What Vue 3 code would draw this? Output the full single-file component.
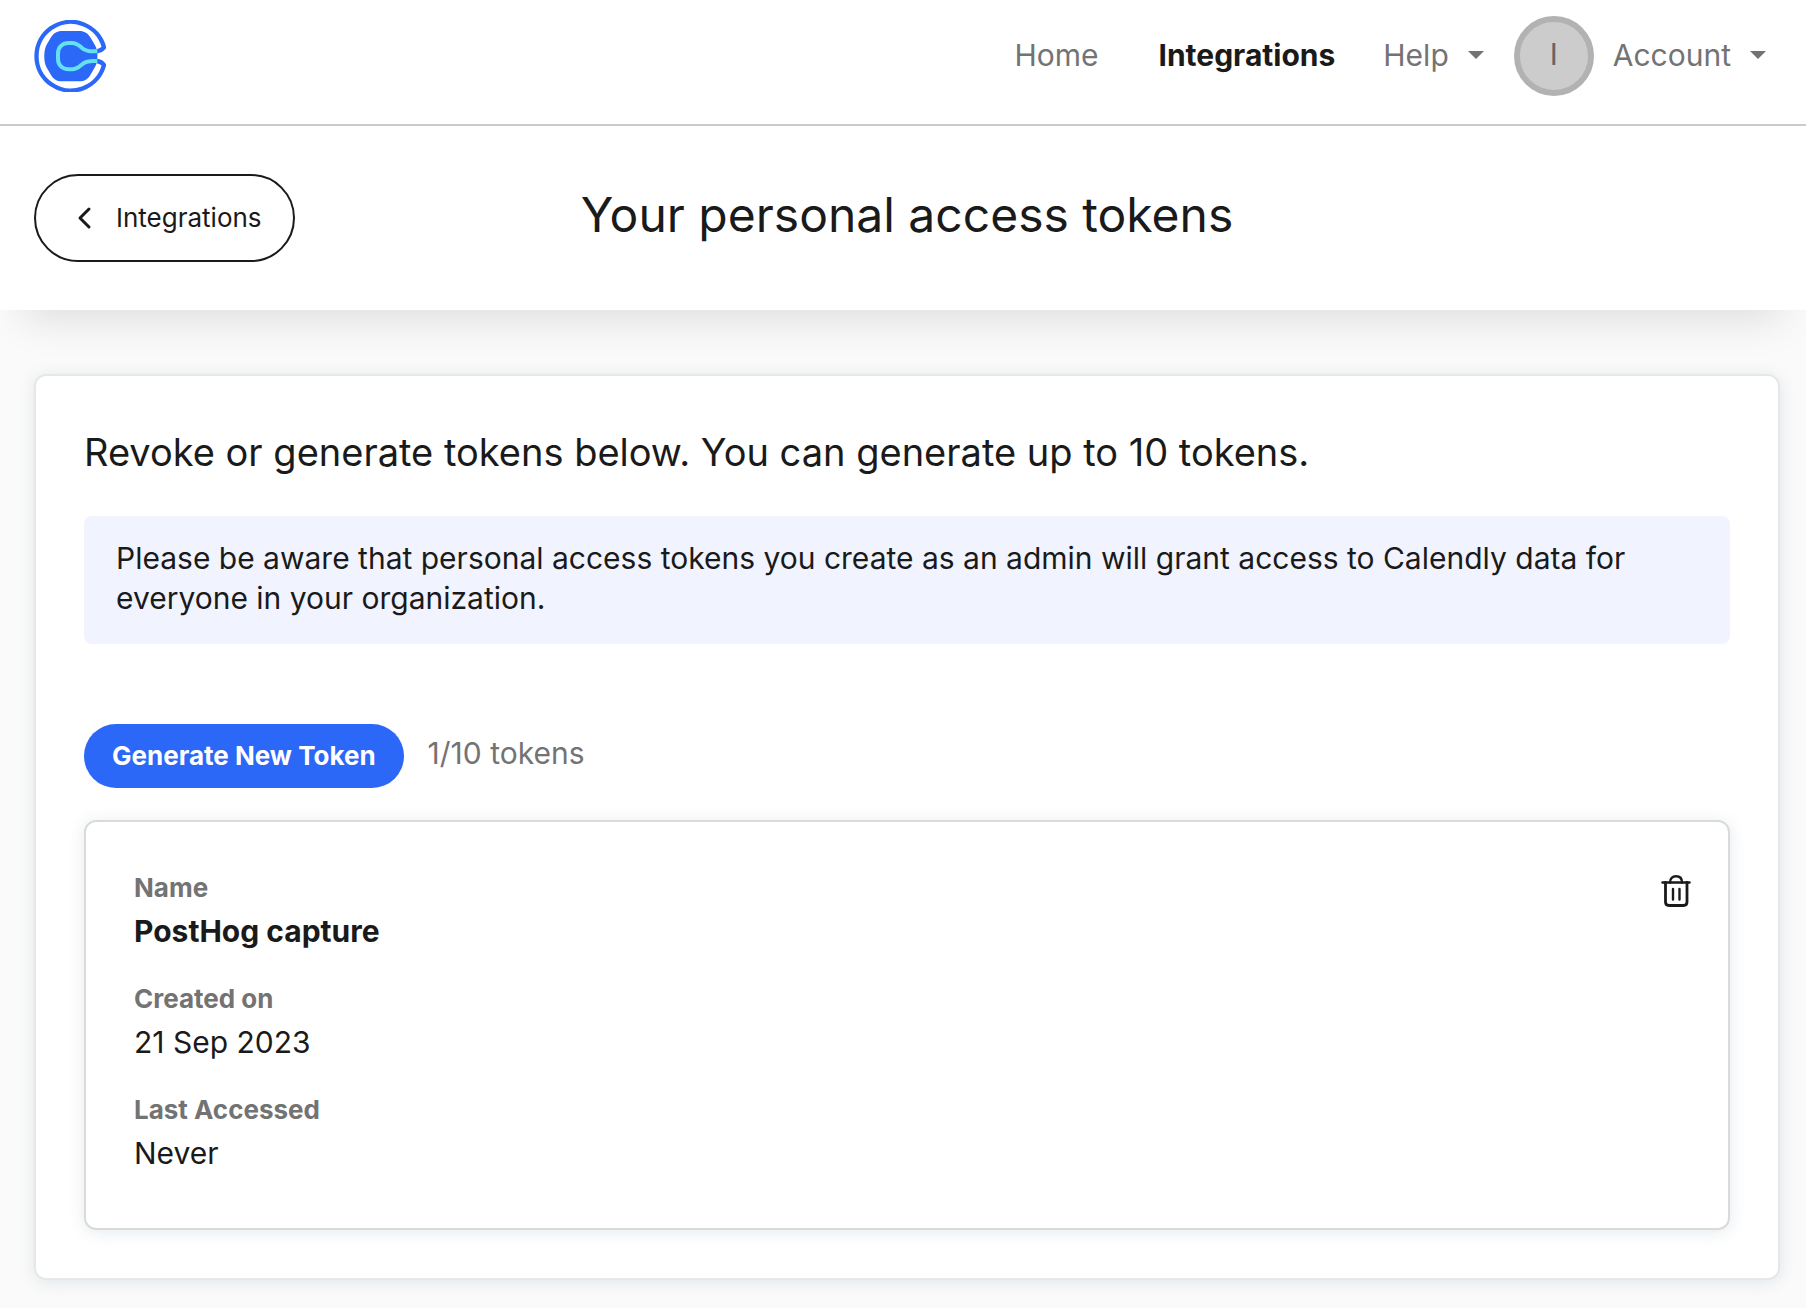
<script setup>
const maxTokens = 10
const tokens = [
  {
    id: 1,
    fields: [
      { label: 'Name', value: 'PostHog capture', strong: true },
      { label: 'Created on', value: '21 Sep 2023' },
      { label: 'Last Accessed', value: 'Never' },
    ],
  },
]
</script>

<template>
  <div class="page">
    <header class="topbar">
      <a class="logo" href="#" aria-label="Calendly">
        <svg width="72" height="72" viewBox="0 0 216 216" fill="none">
          <path
            d="M84 33H136C151 33 162 40 169 52L183 76C193 92 193 125 183 141L169 165C162 177 151 184 136 184H84C69 184 58 177 51 165L37 141C29 126 29 91 37 76L51 52C58 40 69 33 84 33Z"
            fill="#2b68f8"
          />
          <path
            d="M188 94C198 93 205 89 210 82A103 103 0 1 0 210 135C205 128 198 124 188 123"
            stroke="#2b68f8"
            stroke-width="13"
            stroke-linejoin="round"
          />
          <path
            d="M190 94H178C160 94 151 90 143 83C134 75 128 69 114 69H104C85 69 72 82 72 100V117C72 135 85 148 104 148H114C128 148 134 142 143 134C151 127 160 123 178 123H190"
            stroke="#64e1ef"
            stroke-width="12"
          />
        </svg>
      </a>
      <nav class="nav">
        <a class="nav-item" href="#">Home</a>
        <a class="nav-item active" href="#" aria-current="page">Integrations</a>
        <button class="nav-item menu" type="button">
          <span>Help</span>
          <svg width="16" height="8" viewBox="0 0 16 8"><path d="M0 0H16L8 8Z" fill="currentColor" /></svg>
        </button>
        <span class="avatar">I</span>
        <button class="nav-item menu" type="button">
          <span>Account</span>
          <svg width="16" height="8" viewBox="0 0 16 8"><path d="M0 0H16L8 8Z" fill="currentColor" /></svg>
        </button>
      </nav>
    </header>

    <div class="subheader">
      <button class="back" type="button">
        <svg width="24" height="24" viewBox="0 0 24 24" fill="none">
          <path d="M17 3L8 12L17 21" stroke="currentColor" stroke-width="3" stroke-linecap="round" stroke-linejoin="round" />
        </svg>
        <span>Integrations</span>
      </button>
      <h1>Your personal access tokens</h1>
    </div>

    <main>
      <section class="panel">
        <h2>Revoke or generate tokens below. You can generate up to {{ maxTokens }} tokens.</h2>
        <p class="notice">
          Please be aware that personal access tokens you create as an admin will grant access to Calendly data for
          everyone in your organization.
        </p>
        <div class="actions">
          <button class="generate" type="button">Generate New Token</button>
          <span class="count">{{ tokens.length }}/{{ maxTokens }} tokens</span>
        </div>
        <article v-for="token in tokens" :key="token.id" class="token">
          <dl>
            <div v-for="field in token.fields" :key="field.label">
              <dt>{{ field.label }}</dt>
              <dd :class="{ strong: field.strong }">{{ field.value }}</dd>
            </div>
          </dl>
          <button class="delete" type="button" aria-label="Delete token">
            <svg width="32" height="34" viewBox="0 0 32 34" fill="none" stroke="currentColor" stroke-width="2.4" stroke-linecap="round">
              <path d="M2.5 8.5H29.5" />
              <path d="M10 8.5C10 4.5 12.5 2.3 16 2.3S22 4.5 22 8.5" />
              <path d="M5.5 8.5V28C5.5 30.5 6.8 31.5 9 31.5H23.5C25.7 31.5 27 30.5 27 28V8.5" stroke-width="2.8" />
              <path d="M13 15V25.5M19.5 15V25.5" />
            </svg>
          </button>
        </article>
      </section>
    </main>
  </div>
</template>

<style>
body {
  background: #fafafa;
}
</style>

<style scoped>
.page {
  color: #1a1a1a;
  font-family: Inter, sans-serif;
  font-size: 30px;
}

h1,
h2,
p,
dl,
dd {
  margin: 0;
  font-weight: 400;
}

button {
  margin: 0;
  padding: 0;
  border: 0;
  background: none;
  color: inherit;
  font: inherit;
  cursor: pointer;
}

svg {
  display: block;
  flex: none;
}

.topbar {
  display: flex;
  justify-content: space-between;
  padding: 16px 40px 28px 34px;
  border-bottom: 2px solid #cacaca;
  background: #fff;
}

.logo {
  align-self: center;
}

.nav {
  display: flex;
  align-items: center;
}

.nav-item {
  padding-bottom: 2px;
  color: #737373;
  text-decoration: none;
}

.nav-item.active {
  margin: 0 48px 0 60px;
  color: #1a1a1a;
  font-weight: 700;
}

.menu {
  display: flex;
  align-items: center;
  gap: 19px;
}

.avatar {
  box-sizing: border-box;
  width: 80px;
  height: 80px;
  margin: 0 19px 0 30px;
  border: 6px solid #b2b2b2;
  border-radius: 50%;
  background: #ccc;
  color: #666;
  line-height: 64px;
  text-align: center;
}

.subheader {
  position: relative;
  display: grid;
  grid-template-columns: 1fr auto 1fr;
  align-items: center;
  padding: 48px 26px 48px 34px;
  background: #fff;
  box-shadow: 0 32px 40px -24px rgba(0, 0, 0, 0.12);
}

.back {
  display: flex;
  align-items: center;
  justify-self: start;
  gap: 20px;
  height: 88px;
  padding: 0 31px 0 36px;
  border: 2px solid #1a1a1a;
  border-radius: 44px;
  font-size: 26px;
}

.back span {
  padding-bottom: 2px;
}

h1 {
  padding-bottom: 6px;
  font-size: 48px;
  line-height: 60px;
}

main {
  padding: 64px 26px 28px 34px;
}

.panel {
  padding: 48px;
  border: 2px solid #e6e8e8;
  border-radius: 12px;
  background: #fff;
  box-shadow: 0 2px 16px rgba(30, 70, 110, 0.12);
}

h2 {
  font-size: 38px;
  line-height: 56px;
}

.notice {
  margin-top: 36px;
  padding: 22px 32px 26px;
  border-radius: 8px;
  background: #f1f4ff;
  line-height: 40px;
}

.actions {
  display: flex;
  align-items: center;
  gap: 24px;
  margin-top: 80px;
}

.generate {
  height: 64px;
  padding: 0 28px 2px;
  border-radius: 32px;
  background: #2b68f8;
  color: #fff;
  font-size: 26px;
  font-weight: 700;
}

.count {
  padding-bottom: 6px;
  color: #737373;
}

.token {
  display: flex;
  align-items: flex-start;
  justify-content: space-between;
  margin-top: 32px;
  padding: 48px 36px 54px 48px;
  border: 2px solid #d9dada;
  border-radius: 12px;
  box-shadow: 0 2px 16px rgba(30, 70, 110, 0.12);
}

dl {
  display: grid;
  gap: 29px;
}

dt {
  color: #737373;
  font-size: 26px;
  font-weight: 700;
  line-height: 36px;
}

dd {
  margin-top: 4px;
  line-height: 42px;
}

dd.strong {
  font-weight: 700;
}

.delete {
  margin-top: 4px;
}
</style>
